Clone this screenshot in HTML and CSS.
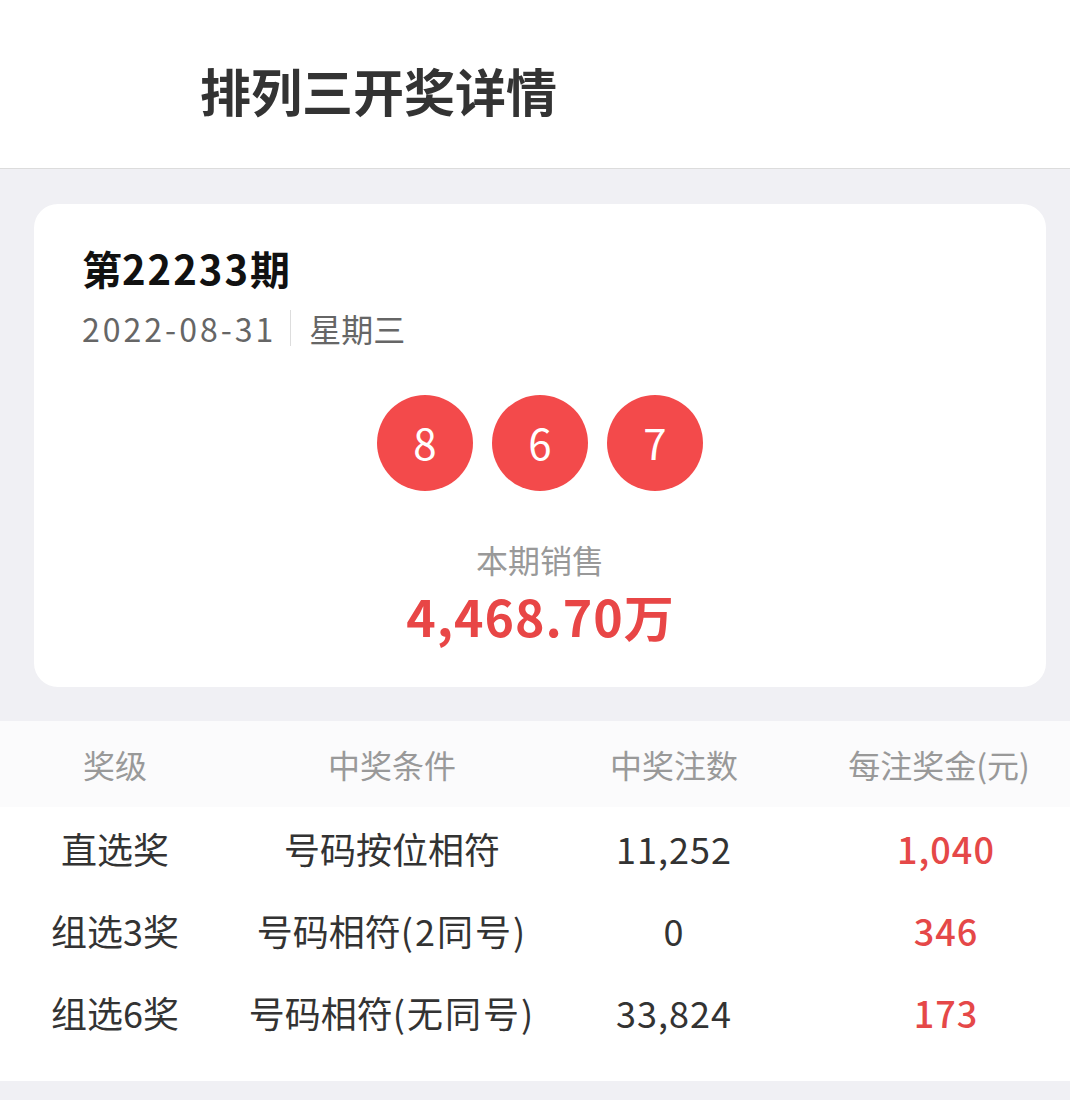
FILE: index.html
```html
<!DOCTYPE html>
<html lang="zh-CN">
  <head>
    <meta charset="UTF-8" />
    <meta name="viewport" content="width=device-width, initial-scale=1.0" />
    <link rel="stylesheet" href="styles.css">
    <title>排列三开奖详情</title>
  </head>
  <body>
    <div class="topbar">
      <h1>排列三开奖详情</h1>
    </div>

    <div class="main">
      <div class="card">
        <div class="issue">第<span class="num">22233</span>期</div>
        <div class="date">
          <span class="day">2022-08-31</span>
          <span class="week">星期三</span>
        </div>
        <div class="balls">
          <span class="ball">8</span>
          <span class="ball">6</span>
          <span class="ball">7</span>
        </div>
        <div class="sales-label">本期销售</div>
        <div class="sales"><span class="num">4,468.70</span>万</div>
      </div>
    </div>

    <div class="prize-table">
      <div class="row head">
        <div>奖级</div>
        <div>中奖条件</div>
        <div>中奖注数</div>
        <div class="money">每注奖金(元)</div>
      </div>
      <div class="row">
        <div>直选奖</div>
        <div>号码按位相符</div>
        <div class="num">11,252</div>
        <div class="money red">1,040</div>
      </div>
      <div class="row">
        <div>组选3奖</div>
        <div>号码相符<span class="paren">(2同号)</span></div>
        <div class="num">0</div>
        <div class="money red">346</div>
      </div>
      <div class="row">
        <div>组选6奖</div>
        <div>号码相符<span class="paren">(无同号)</span></div>
        <div class="num">33,824</div>
        <div class="money red">173</div>
      </div>
    </div>
  </body>
</html>
```

FILE: styles.css
```css
body {
  margin: 0;
  background-color: #f0f0f4;
  font-family: "Noto Sans CJK SC", "Noto Sans", sans-serif;
  color: #333;
}

.topbar {
  height: 156px;
  padding: 12px 0 0 200px;
  display: flex;
  align-items: center;
  background-color: #fff;
  border-bottom: 1px solid #dcdcdc;
}

.topbar h1 {
  margin: 0;
  font-size: 51px;
  font-weight: bold;
  color: #333;
  line-height: 60px;
}

.main {
  padding: 35px 24px 34px 34px;
}

.card {
  background-color: #fff;
  border-radius: 24px;
  padding: 40px 48px 42px 48px;
  text-align: center;
}

.issue {
  text-align: left;
  font-size: 40px;
  font-weight: bold;
  line-height: 48px;
  color: #111;
}

.issue .num {
  letter-spacing: 2px;
}

.date {
  margin-top: 14px;
  display: flex;
  align-items: center;
  font-size: 32px;
  line-height: 44px;
  color: #666;
}

.date .day {
  letter-spacing: 3px;
  padding-right: 14px;
  border-right: 1px solid #ddd;
  line-height: 36px;
}

.date .week {
  padding-left: 18px;
}

.balls {
  margin-top: 45px;
  display: flex;
  justify-content: center;
  gap: 19px;
}

.ball {
  width: 96px;
  height: 96px;
  border-radius: 50%;
  background-color: #f34a4b;
  color: #fff;
  font-size: 42px;
  line-height: 94px;
}

.sales-label {
  margin-top: 46px;
  font-size: 32px;
  line-height: 44px;
  color: #999;
}

.sales {
  margin-top: 4px;
  font-size: 50px;
  font-weight: bold;
  line-height: 60px;
  color: #e84646;
}

.sales .num {
  letter-spacing: 1px;
}

.prize-table {
  background-color: #fff;
  padding-bottom: 28px;
  margin-bottom: 20px;
}

.row {
  display: grid;
  grid-template-columns: 230px 324px 240px 1fr;
  height: 82px;
  align-items: center;
  text-align: center;
  font-size: 36px;
  color: #333;
}

.row.head {
  height: 86px;
  background-color: #fbfbfc;
  font-size: 32px;
  color: #999;
}

.row .num {
  letter-spacing: 1px;
}

.row .paren {
  letter-spacing: 2px;
}

.money {
  padding-left: 14px;
}

.red {
  padding-left: 28px;
  color: #e54848;
  font-weight: 500;
  letter-spacing: 1px;
}
```
